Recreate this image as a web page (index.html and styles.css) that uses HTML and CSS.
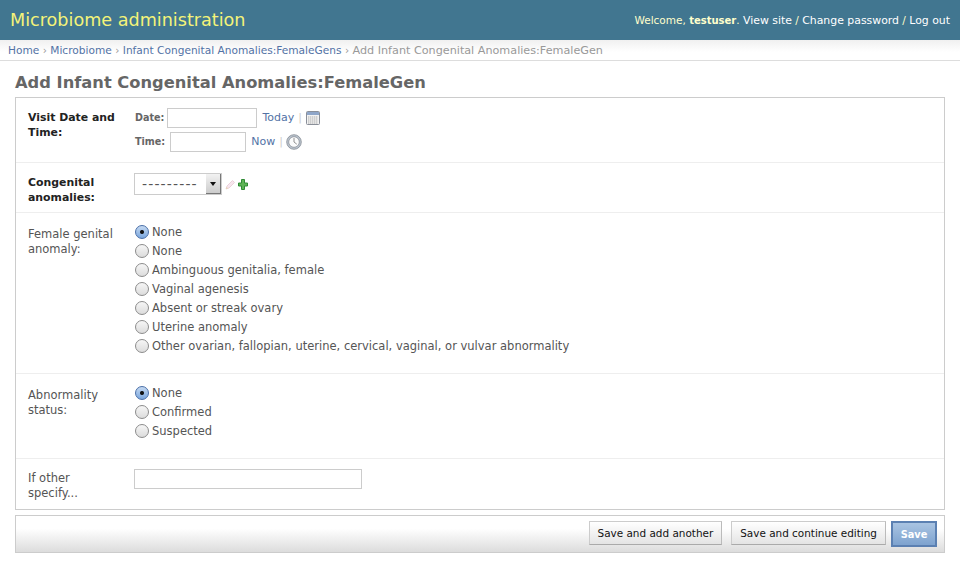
FILE: index.html
```html
<!DOCTYPE html>
<html lang="en">
<head>
    <meta charset="UTF-8">
    <title>Add Infant Congenital Anomalies:FemaleGen</title>
    <link rel="stylesheet" href="styles.css">
</head>
<body>
<div class="header">
    <div class="branding">Microbiome administration</div>
    <div class="tools">Welcome, <strong>testuser</strong>. <a href="#">View site</a> / <a href="#">Change password</a> / <a href="#">Log out</a></div>
</div>
<div class="breadcrumbs"><a href="#">Home</a> › <a href="#">Microbiome</a> › <a href="#">Infant Congenital Anomalies:FemaleGens</a> › <span class="current">Add Infant Congenital Anomalies:FemaleGen</span></div>
<div class="content">
    <h1>Add Infant Congenital Anomalies:FemaleGen</h1>
    <div class="module">
        <div class="row row-date">
            <label class="name required">Visit Date and Time:</label>
            <div class="field">
                <p class="datetime">
                    <span class="sub">Date:</span>
                    <input type="text" class="date-input">
                    <a href="#" class="shortcut">Today</a><span class="sep">|</span>
                    <svg class="icon" width="16" height="16" viewBox="0 0 16 16"><rect x="1.500" y="1.500" width="13" height="13" rx="1" fill="#f2f2f2" stroke="#8a8f99"/><rect x="2" y="2" width="12" height="3" fill="#8fa6c9"/><path d="M3 7h10M3 9h10M3 11h10M3 13h10M4 6.500v7M6 6.500v7M8 6.500v7M10 6.500v7M12 6.500v7" stroke="#a8a8a8" stroke-width=".7" stroke-dasharray="1 1"/></svg>
                </p>
                <p class="datetime">
                    <span class="sub sub-time">Time:</span>
                    <input type="text" class="time-input">
                    <a href="#" class="shortcut">Now</a><span class="sep">|</span>
                    <svg class="icon" width="16" height="16" viewBox="0 0 16 16"><circle cx="8" cy="8" r="7.300" fill="#bcc5cf" stroke="#858b94" stroke-width=".8"/><circle cx="8" cy="8" r="5.300" fill="#fbfbfb" stroke="#7f858e" stroke-width=".7"/><path d="M8 4v4l2.800 2.200" fill="none" stroke="#777" stroke-width=".8"/></svg>
                </p>
            </div>
        </div>
        <div class="row row-select">
            <label class="name required">Congenital anomalies:</label>
            <div class="field select-field">
                <div class="select"><span class="select-value">---------</span><span class="select-arrow"></span></div>
                <svg class="pencil" width="11" height="11" viewBox="0 0 11 11"><path d="M1 10l1-3 5.500-5.500 2 2L4 9z" fill="#f7e6ee" stroke="#e8c8d4" stroke-width=".8"/><path d="M1 10l.7-2 1.300 1.300z" fill="#e6d9a8"/></svg>
                <svg class="plus" width="10" height="11" viewBox="0 0 10 11"><path d="M3.500 .5h3v3.500h3v3h-3v3.500h-3V7h-3V4h3z" fill="#5fb356" stroke="#2f8a35"/></svg>
            </div>
        </div>
        <div class="row row-gender">
            <label class="name">Female genital anomaly:</label>
            <ul class="radios">
                <li><span class="radio checked"></span>None</li>
                <li><span class="radio"></span>None</li>
                <li><span class="radio"></span>Ambinguous genitalia, female</li>
                <li><span class="radio"></span>Vaginal agenesis</li>
                <li><span class="radio"></span>Absent or streak ovary</li>
                <li><span class="radio"></span>Uterine anomaly</li>
                <li><span class="radio"></span>Other ovarian, fallopian, uterine, cervical, vaginal, or vulvar abnormality</li>
            </ul>
        </div>
        <div class="row row-status">
            <label class="name">Abnormality status:</label>
            <ul class="radios">
                <li><span class="radio checked"></span>None</li>
                <li><span class="radio"></span>Confirmed</li>
                <li><span class="radio"></span>Suspected</li>
            </ul>
        </div>
        <div class="row row-other">
            <label class="name">If other specify...</label>
            <div class="field"><input type="text" class="other-input"></div>
        </div>
    </div>
    <div class="submit-row">
        <button class="btn">Save and add another</button>
        <button class="btn">Save and continue editing</button>
        <button class="btn default">Save</button>
    </div>
</div>
</body>
</html>
```

FILE: styles.css
```css
body {
    margin: 0;
    background: #fff;
    color: #333;
    font-family: "DejaVu Sans", "Liberation Sans", sans-serif;
    font-size: 11.5px;
}
a {
    color: #5272a5;
    text-decoration: none;
}
.header {
    display: flex;
    justify-content: space-between;
    align-items: center;
    height: 40px;
    padding: 0 10px;
    background: #417690;
    color: #ffc;
}
.branding {
    font-size: 17.600px;
    color: #f4f379;
}
.tools {
    font-size: 10.500px;
}
.tools strong {
    font-size: 10px;
}
.tools a {
    font-size: 10.900px;
    color: #fff;
}
.breadcrumbs {
    height: 20px;
    line-height: 20px;
    padding: 0 8px;
    font-size: 10.600px;
    color: #999;
    background: linear-gradient(#f0f0f0, #fff 60%);
    border-bottom: 1px solid #ddd;
    white-space: nowrap;
}
.current {
    font-size: 11.200px;
}
.content {
    padding: 0 15px;
}
h1 {
    margin: 0;
    padding-top: 10px;
    height: 26px;
    line-height: 24px;
    font-size: 16.300px;
    color: #666;
}
.module {
    border: 1px solid #ccc;
}
.row {
    display: flex;
    box-sizing: border-box;
    padding: 10px 12px 0;
    border-bottom: 1px solid #eee;
}
.row:last-child {
    border-bottom: 0;
}
.row-date { height: 65px; }
.row-select { height: 50px; }
.row-gender { height: 161px; padding-top: 9px; }
.row-status { height: 85px; padding-top: 9px; }
.row-other { height: 50px; }
.name {
    flex: none;
    width: 90px;
    margin: 2px 16px 0 0;
    line-height: 15px;
    color: #555;
}
.row-gender .name,
.row-status .name {
    margin-top: 5px;
}
.name.required {
    font-size: 10.900px;
    font-weight: bold;
    color: #222;
}
.datetime {
    display: flex;
    align-items: center;
    height: 20px;
    margin: 0 0 4px;
    gap: 3px;
    font-size: 11px;
}
.sub {
    margin-left: 1px;
    padding-bottom: 2px;
    font-size: 9.600px;
    font-weight: bold;
    color: #666;
}
.sub-time {
    margin-right: 2px;
}
input {
    box-sizing: border-box;
    height: 20px;
    padding: 0;
    border: 1px solid #ccc;
    background: #fff;
}
.date-input { width: 90px; }
.time-input { width: 76px; }
.other-input { width: 228px; }
.shortcut {
    margin-left: 2px;
    padding-bottom: 2px;
}
.sep {
    padding-bottom: 2px;
    color: #ccc;
    margin-left: 1px;
}
.select-field {
    display: flex;
    align-items: flex-start;
    gap: 3px;
}
.select {
    display: flex;
    box-sizing: border-box;
    width: 88px;
    height: 22px;
    border: 1px solid #ccc;
    background: #fff;
}
.select-value {
    flex: 1;
    padding-left: 7px;
    line-height: 20px;
    font-size: 14px;
    letter-spacing: 1.150px;
    color: #555;
    overflow: hidden;
}
.select-arrow {
    position: relative;
    flex: none;
    width: 14px;
    background: linear-gradient(#f2f2f2, #ccc);
    border-right: 1px solid #777;
    border-bottom: 1px solid #777;
}
.select-arrow::after {
    content: "";
    position: absolute;
    left: 4px;
    top: 8px;
    border: 3px solid transparent;
    border-top: 4px solid #111;
}
.pencil, .plus {
    margin-top: 6px;
}
.plus {
    margin-left: -1px;
}
.radios {
    margin: 0;
    padding: 0;
    list-style: none;
}
.radios li {
    display: flex;
    align-items: center;
    height: 19px;
    color: #555;
    white-space: nowrap;
}
.radio {
    flex: none;
    box-sizing: border-box;
    width: 14px;
    height: 14px;
    margin: 1px 3px 0 1px;
    border: 1px solid #8c8c8c;
    border-radius: 50%;
    background: linear-gradient(#f6f6f6, #dcdcdc);
}
.radio.checked {
    border-color: #4a6fa8;
    background: radial-gradient(circle, #111 0 1.500px, transparent 2.500px), linear-gradient(#c5d9f1, #7ba7de);
}
.submit-row {
    display: flex;
    justify-content: flex-end;
    align-items: flex-start;
    box-sizing: border-box;
    height: 38px;
    margin-top: 5px;
    padding: 5px 7px 0;
    border: 1px solid #ccc;
    background: linear-gradient(#fff 35%, #dcdcdc);
}
.btn {
    height: 24px;
    margin-left: 9px;
    padding: 0 8px;
    border: 1px solid #ccc;
    border-bottom-color: #aaa;
    border-right-color: #bbb;
    background: linear-gradient(#fff, #e4e4e4);
    color: #111;
    font-family: inherit;
    font-size: 10.450px;
}
.btn.default {
    width: 46px;
    height: 26px;
    margin-left: 5px;
    padding: 0;
    border: 2px solid #5b80b2;
    background: linear-gradient(#a9c4e2, #7ea3cf);
    color: #fff;
    font-size: 9.800px;
    font-weight: bold;
}
```
